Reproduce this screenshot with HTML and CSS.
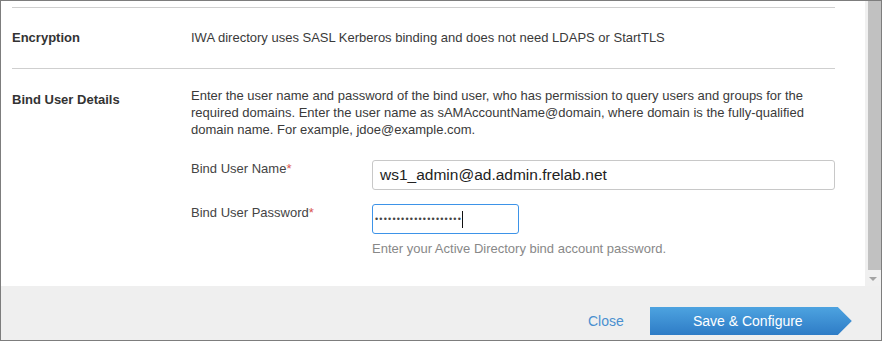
FILE: index.html
```html
<!DOCTYPE html>
<html lang="en">
<head>
    <meta charset="UTF-8">
    <title>Directory Settings</title>
    <link rel="stylesheet" href="styles.css">
</head>
<body>
    <div class="dialog">
        <div class="dialog-body">
            <div class="content">
                <div class="row">
                    <div class="row-label">Encryption</div>
                    <div class="row-value">IWA directory uses SASL Kerberos binding and does not need LDAPS or StartTLS</div>
                </div>

                <div class="row bind">
                    <div class="row-label bind-label">Bind User Details</div>
                    <div class="row-value">
                        <p class="intro">Enter the user name and password of the bind user, who has permission to query users and groups for the required domains. Enter the user name as sAMAccountName@domain, where domain is the fully-qualified domain name. For example, jdoe@example.com.</p>

                        <div class="field">
                            <label>Bind User Name<span class="req">*</span></label>
                            <div class="input wide">ws1_admin@ad.admin.frelab.net</div>
                        </div>

                        <div class="field">
                            <label>Bind User Password<span class="req">*</span></label>
                            <div>
                                <div class="input short focused"><span class="dots">••••••••••••••••••••</span><span class="caret"></span></div>
                                <div class="help">Enter your Active Directory bind account password.</div>
                            </div>
                        </div>
                    </div>
                </div>
            </div>

            <div class="scrollbar">
                <div class="thumb"></div>
                <div class="arrow"></div>
            </div>
        </div>

        <div class="footer">
            <a class="close" href="#">Close</a>
            <button class="save">Save &amp; Configure</button>
        </div>
    </div>
</body>
</html>
```

FILE: styles.css
```css
body {
    margin: 0;
    background: #fff;
    font-family: "Liberation Sans", Arial, sans-serif;
    font-size: 13px;
    color: #333;
}
.dialog {
    width: 882px;
    height: 341px;
    box-sizing: border-box;
    border: 1px solid #7d7d7d;
    display: flex;
    flex-direction: column;
}
.dialog-body {
    height: 285px;
    display: flex;
    background: #fff;
}
.content {
    flex: 1;
    padding: 6px 30px 0 11px;
    overflow: hidden;
}
.row {
    display: grid;
    grid-template-columns: 179px 1fr;
    border-top: 1px solid #cfcfcf;
    padding: 21px 0 22px;
    line-height: 17px;
}
.row-label {
    font-weight: bold;
    color: #333;
}
.row-value {
    color: #3a3a3a;
}
.bind {
    padding-top: 18px;
}
.bind-label {
    padding-top: 4px;
}
.intro {
    margin: 0 0 22px;
}
.field {
    display: grid;
    grid-template-columns: 181px 1fr;
    margin-bottom: 14px;
}
.field label {
    color: #444;
}
.req {
    color: #d9534f;
}
.input {
    box-sizing: border-box;
    height: 30px;
    border: 1px solid #c8c8c8;
    border-radius: 3px;
    padding: 0 7px;
    font-size: 15.5px;
    line-height: 28px;
    color: #222;
}
.wide {
    width: 463px;
}
.short {
    width: 147px;
    padding: 0 2px;
}
.focused {
    border-color: #3d93e8;
    display: flex;
    align-items: center;
}
.dots {
    font-size: 9px;
    letter-spacing: 1.2px;
    color: #444;
}
.caret {
    display: inline-block;
    width: 1px;
    height: 17px;
    background: #111;
}
.help {
    margin-top: 6px;
    font-size: 13px;
    color: #888;
}
.scrollbar {
    width: 16px;
    background: #f0f0f0;
    display: flex;
    flex-direction: column;
    align-items: flex-end;
}
.thumb {
    width: 13px;
    height: 269px;
    background: #c1c1c1;
}
.arrow {
    margin: 7px 4px 0 0;
    width: 0;
    height: 0;
    border-left: 4px solid transparent;
    border-right: 4px solid transparent;
    border-top: 4px solid #a3a3a3;
}
.footer {
    flex: 1;
    background: #efefef;
    display: flex;
    align-items: flex-start;
    padding: 21px 0 0 587px;
}
.close {
    color: #4a90d0;
    font-size: 14px;
    text-decoration: none;
    margin-top: 6px;
}
.save {
    margin-left: 26px;
    width: 202px;
    height: 28px;
    border: none;
    padding: 0 6px 0 0;
    font-family: "Liberation Sans", Arial, sans-serif;
    font-size: 14px;
    color: #fff;
    background: linear-gradient(#4da3e0, #2e7cc6);
    clip-path: polygon(0 0, 188px 0, 100% 50%, 188px 100%, 0 100%);
    cursor: pointer;
}
```
